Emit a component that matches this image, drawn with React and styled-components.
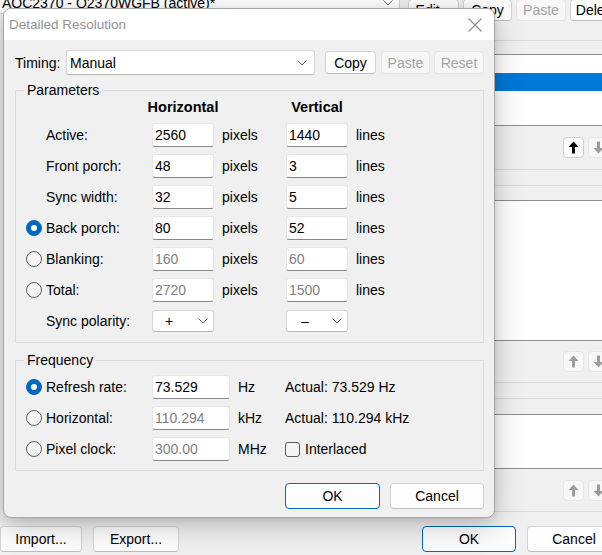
import React from 'react';
import styled, { createGlobalStyle } from 'styled-components';

const GlobalStyle = createGlobalStyle`
  html, body { margin: 0; padding: 0; background: #f0f0f0; }
  body {
    font-family: "Liberation Sans", Arial, sans-serif;
    font-size: 14px;
    color: #000;
    overflow: hidden;
  }
  * { box-sizing: border-box; }
`;

const Page = styled.div`
  position: relative;
  width: 602px;
  height: 555px;
  overflow: hidden;
  background: #f0f0f0;
`;

/* ---------- background main window ---------- */
const MainWindow = styled.div`
  width: 632px;
  display: flex;
  flex-direction: column;
`;

const TopBar = styled.div`
  display: flex;
  align-items: flex-start;
  height: 22px;
  margin-top: -1px;
  gap: 4px;
`;

const MainCombo = styled.div`
  flex: none;
  width: 402px;
  height: 22px;
  margin: -7px 4px 0 -2px;
  padding: 0 6px 0 3px;
  display: flex;
  align-items: center;
  justify-content: space-between;
  background: #fff;
  border: 1px solid #d0d0d0;
  border-radius: 3px;
  white-space: nowrap;
`;

const WinButton = styled.button`
  flex: none;
  width: ${(p) => p.$w}px;
  height: ${(p) => p.$h || 23}px;
  margin-left: ${(p) => p.$ml || 0}px;
  padding: 0;
  font: inherit;
  font-size: 14px;
  color: ${(p) => (p.disabled ? '#a3a3a3' : '#000')};
  background: ${(p) => (p.disabled ? '#f7f7f7' : '#fdfdfd')};
  border: 1px solid
    ${(p) => (p.$primary ? '#0067c0' : p.disabled ? '#e5e5e5' : '#d3d3d3')};
  border-bottom-color: ${(p) =>
    p.$primary ? '#0067c0' : p.disabled ? '#e5e5e5' : '#bdbdbd'};
  border-radius: 4px;
  white-space: nowrap;
`;

const Panel = styled.div`
  margin: ${(p) => p.$mt}px 10px 0;
  padding: ${(p) => p.$pt}px 8px ${(p) => p.$pb}px;
  border: 1px solid #dadada;
  display: flex;
  flex-direction: column;
`;

const ListBox = styled.div`
  height: ${(p) => p.$h}px;
  background: #fff;
  border: 1px solid #8c8c8c;
  display: flex;
  flex-direction: column;
`;

const ListRow = styled.div`
  height: 18px;
  flex: none;
  background: ${(p) => (p.$selected ? '#0078d7' : 'transparent')};
`;

const ArrowRow = styled.div`
  display: flex;
  justify-content: flex-end;
  gap: 4px;
  margin-top: ${(p) => p.$mt}px;
  padding-right: 4px;
`;

const ArrowButton = styled.div`
  width: 21px;
  height: 21px;
  display: flex;
  align-items: center;
  justify-content: center;
  background: ${(p) => (p.$enabled ? '#fdfdfd' : '#f7f7f7')};
  border: 1px solid ${(p) => (p.$enabled ? '#cfcfcf' : '#e6e6e6')};
  border-radius: 4px;
  color: ${(p) => (p.$enabled ? '#000' : '#9d9d9d')};
`;

const BottomBar = styled.div`
  display: flex;
  align-items: center;
  margin-top: 14px;
  height: 26px;
  padding-right: 11px;
`;

const Spacer = styled.div`
  flex: 1;
`;

/* ---------- dialog ---------- */
const Dialog = styled.div`
  position: absolute;
  left: 3px;
  top: 8px;
  width: 492px;
  display: flex;
  flex-direction: column;
  background: #f0f0f0;
  border: 1px solid #a6a6a6;
  border-radius: 8px;
  overflow: hidden;
  box-shadow: 0 8px 30px rgba(0, 0, 0, 0.22), 0 2px 8px rgba(0, 0, 0, 0.1);
`;

const TitleBar = styled.div`
  height: 31px;
  display: flex;
  align-items: center;
  justify-content: space-between;
  padding: 0 12px 0 5px;
  background: #fff;
`;

const TitleText = styled.span`
  font-size: 13.5px;
  color: #939393;
`;

const DialogBody = styled.div`
  display: flex;
  flex-direction: column;
  padding: 10px 10px 8px 11px;
`;

const TimingRow = styled.div`
  display: flex;
  align-items: center;
  height: 25px;
`;

const TimingLabel = styled.span`
  width: 51px;
  flex: none;
`;

const ComboBox = styled.div`
  flex: none;
  width: ${(p) => (p.$w ? `${p.$w}px` : '100%')};
  height: ${(p) => p.$h}px;
  display: flex;
  align-items: center;
  justify-content: space-between;
  padding: 0 ${(p) => p.$pr}px 0 ${(p) => p.$pl}px;
  background: #fff;
  border: 1px solid #d6d6d6;
  border-bottom-color: #b5b5b5;
  border-radius: 3px;
`;

const Group = styled.fieldset`
  margin: ${(p) => p.$mt}px 0 0;
  padding: ${(p) => p.$pt}px 8px ${(p) => p.$pb}px;
  border: 1px solid #dcdcdc;
  min-width: 0;
`;

const Legend = styled.legend`
  padding: 0 3px;
  line-height: 16px;
  font-size: 14px;
`;

const ParamGrid = styled.div`
  display: grid;
  grid-template-columns: 22px 106px 62px 72px 62px 1fr;
  grid-template-rows: 18px repeat(7, 24px);
  row-gap: 7px;
  align-items: center;
`;

const FreqGrid = styled.div`
  display: grid;
  grid-template-columns: 22px 106px 78px 55px 1fr;
  grid-template-rows: repeat(3, 24px);
  row-gap: 7px;
  align-items: center;
`;

const HeaderCell = styled.div`
  grid-column: ${(p) => p.$col};
  justify-self: center;
  font-weight: bold;
  font-size: 14.5px;
`;

const RadioCell = styled.div`
  grid-column: 1;
  display: flex;
  align-items: center;
`;

const Radio = styled.span`
  width: 16px;
  height: 16px;
  margin-left: 2px;
  border-radius: 50%;
  display: flex;
  align-items: center;
  justify-content: center;
  background: ${(p) => (p.$checked ? '#0067c0' : '#f5f5f5')};
  border: 1px solid ${(p) => (p.$checked ? '#0067c0' : '#5c5c5c')};
  &::after {
    content: '';
    display: ${(p) => (p.$checked ? 'block' : 'none')};
    width: 6px;
    height: 6px;
    border-radius: 50%;
    background: #fff;
  }
`;

const RowLabel = styled.span`
  grid-column: 2;
  white-space: nowrap;
`;

const FieldInput = styled.input`
  width: 100%;
  height: 24px;
  font: inherit;
  font-size: 14px;
  color: ${(p) => (p.$dim ? '#7f7f7f' : '#000')};
  background: #fff;
  border: 1px solid #e6e6e6;
  border-bottom-color: #878787;
  border-radius: 3px;
  padding: 0 2px;
  outline: none;
`;

const Unit = styled.span`
  padding-left: 8px;
  white-space: nowrap;
`;

const CheckRow = styled.label`
  display: flex;
  align-items: center;
  gap: 5px;
`;

const CheckBox = styled.span`
  width: 15px;
  height: 15px;
  border: 1px solid #5c5c5c;
  border-radius: 3px;
  background: #f5f5f5;
`;

const DialogButtons = styled.div`
  display: flex;
  justify-content: flex-end;
  gap: 10px;
  margin-top: 12px;
`;

/* ---------- icons ---------- */
const Chevron = () => (
  <svg width="10" height="6" viewBox="0 0 10 6">
    <polyline points="0.5,0.5 5,5 9.5,0.5" fill="none" stroke="#5f5f5f" strokeWidth="1" />
  </svg>
);

const CloseX = () => (
  <svg width="14" height="14" viewBox="0 0 14 14">
    <path d="M0.5 0.5 L13.5 13.5 M13.5 0.5 L0.5 13.5" stroke="#8d8d8d" strokeWidth="1.1" />
  </svg>
);

const ArrowIcon = ({ down }) => (
  <svg
    width="11"
    height="13"
    viewBox="0 0 11 13"
    style={down ? { transform: 'rotate(180deg)' } : undefined}
  >
    <path d="M5.5 0.5 L10.5 6 H7 V12.5 H4 V6 H0.5 Z" fill="currentColor" />
  </svg>
);

/* ---------- data ---------- */
const paramRows = [
  { label: 'Active:', h: '2560', v: '1440' },
  { label: 'Front porch:', h: '48', v: '3' },
  { label: 'Sync width:', h: '32', v: '5' },
  { label: 'Back porch:', h: '80', v: '52', radio: true, checked: true },
  { label: 'Blanking:', h: '160', v: '60', radio: true, dim: true },
  { label: 'Total:', h: '2720', v: '1500', radio: true, dim: true },
];

const freqRows = [
  { label: 'Refresh rate:', value: '73.529', unit: 'Hz', checked: true, extra: 'Actual: 73.529 Hz' },
  { label: 'Horizontal:', value: '110.294', unit: 'kHz', dim: true, extra: 'Actual: 110.294 kHz' },
  { label: 'Pixel clock:', value: '300.00', unit: 'MHz', dim: true, check: 'Interlaced' },
];

export default function App() {
  return (
    <>
      <GlobalStyle />
      <Page>
        <MainWindow>
          <TopBar>
            <MainCombo>
              <span>AOC2370 - Q2370WGFB (active)*</span>
              <Chevron />
            </MainCombo>
            <WinButton $w={51} $h={22}>Edit...</WinButton>
            <WinButton $w={49} $h={22}>Copy</WinButton>
            <WinButton $w={50} $h={22} disabled>Paste</WinButton>
            <WinButton $w={52} $h={22}>Delete</WinButton>
          </TopBar>

          <Panel $mt={19} $pt={13} $pb={11}>
            <ListBox $h={72}>
              <ListRow />
              <ListRow $selected />
            </ListBox>
            <ArrowRow $mt={11}>
              <ArrowButton $enabled><ArrowIcon /></ArrowButton>
              <ArrowButton><ArrowIcon down /></ArrowButton>
            </ArrowRow>
          </Panel>

          <Panel $mt={15} $pt={14} $pb={10}>
            <ListBox $h={141} />
            <ArrowRow $mt={10}>
              <ArrowButton><ArrowIcon /></ArrowButton>
              <ArrowButton><ArrowIcon down /></ArrowButton>
            </ArrowRow>
          </Panel>

          <Panel $mt={15} $pt={15} $pb={10}>
            <ListBox $h={55} />
            <ArrowRow $mt={11}>
              <ArrowButton><ArrowIcon /></ArrowButton>
              <ArrowButton><ArrowIcon down /></ArrowButton>
            </ArrowRow>
          </Panel>

          <BottomBar>
            <WinButton $w={82} $h={26}>Import...</WinButton>
            <WinButton $w={86} $h={26} $ml={11}>Export...</WinButton>
            <Spacer />
            <WinButton $w={94} $h={26} $primary>OK</WinButton>
            <WinButton $w={94} $h={26} $ml={11}>Cancel</WinButton>
          </BottomBar>
        </MainWindow>

        <Dialog>
          <TitleBar>
            <TitleText>Detailed Resolution</TitleText>
            <CloseX />
          </TitleBar>
          <DialogBody>
            <TimingRow>
              <TimingLabel>Timing:</TimingLabel>
              <ComboBox $w={249} $h={25} $pl={3} $pr={7}>
                <span>Manual</span>
                <Chevron />
              </ComboBox>
              <WinButton $w={51} $ml={10}>Copy</WinButton>
              <WinButton $w={49} $ml={5} disabled>Paste</WinButton>
              <WinButton $w={50} $ml={4} disabled>Reset</WinButton>
            </TimingRow>

            <Group $mt={7} $pt={0} $pb={9}>
              <Legend>Parameters</Legend>
              <ParamGrid>
                <HeaderCell $col={3}>Horizontal</HeaderCell>
                <HeaderCell $col={5}>Vertical</HeaderCell>
                {paramRows.map((r) => (
                  <React.Fragment key={r.label}>
                    <RadioCell>{r.radio && <Radio $checked={r.checked} />}</RadioCell>
                    <RowLabel>{r.label}</RowLabel>
                    <FieldInput readOnly value={r.h} $dim={r.dim} />
                    <Unit>pixels</Unit>
                    <FieldInput readOnly value={r.v} $dim={r.dim} />
                    <Unit>lines</Unit>
                  </React.Fragment>
                ))}
                <RadioCell />
                <RowLabel>Sync polarity:</RowLabel>
                <ComboBox $h={22} $pl={12} $pr={5}>
                  <span>+</span>
                  <Chevron />
                </ComboBox>
                <span />
                <ComboBox $h={22} $pl={14} $pr={5}>
                  <span>–</span>
                  <Chevron />
                </ComboBox>
              </ParamGrid>
            </Group>

            <Group $mt={9} $pt={7} $pb={9}>
              <Legend>Frequency</Legend>
              <FreqGrid>
                {freqRows.map((r) => (
                  <React.Fragment key={r.label}>
                    <RadioCell><Radio $checked={r.checked} /></RadioCell>
                    <RowLabel>{r.label}</RowLabel>
                    <FieldInput readOnly value={r.value} $dim={r.dim} />
                    <Unit>{r.unit}</Unit>
                    {r.extra ? (
                      <span>{r.extra}</span>
                    ) : (
                      <CheckRow>
                        <CheckBox />
                        <span>{r.check}</span>
                      </CheckRow>
                    )}
                  </React.Fragment>
                ))}
              </FreqGrid>
            </Group>

            <DialogButtons>
              <WinButton $w={95} $h={26} $primary>OK</WinButton>
              <WinButton $w={94} $h={26}>Cancel</WinButton>
            </DialogButtons>
          </DialogBody>
        </Dialog>
      </Page>
    </>
  );
}
